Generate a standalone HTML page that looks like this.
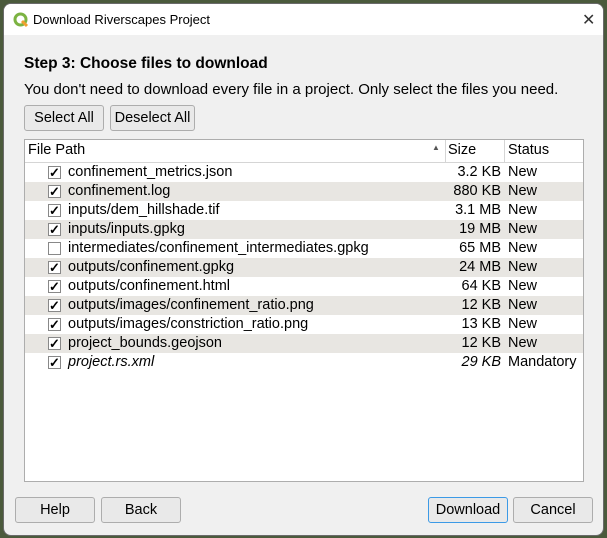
<!DOCTYPE html>
<html><head><style>
body{margin:0;width:607px;height:538px;background:#4b5a3c;font-family:"Liberation Sans",sans-serif;position:relative;overflow:hidden}
.win{position:absolute;left:4px;top:4px;width:599px;height:531px;background:#f0f0f0;border-radius:7px;overflow:hidden;box-shadow:0 0 0 1px #6a6a6a}
.tb{position:absolute;left:0;top:0;width:599px;height:31px;background:#fff}
.a{position:absolute;white-space:nowrap}
.btn{position:absolute;height:26px;border:1px solid #adadad;background:#e9e9e9;border-radius:3px;font-size:14.5px;text-align:center;line-height:25px;color:#000;box-sizing:border-box}
.tbl{position:absolute;left:20px;top:135px;width:560px;height:343px;background:#fff;border:1px solid #adadad;box-sizing:border-box}
.hd{position:absolute;left:0;top:0;width:558px;height:22px;border-bottom:1px solid #d5d5d5;background:#fff;font-size:14.5px}
.row{position:absolute;left:0;width:558px;height:19px;font-size:14.5px;line-height:19px}
.g{background:#e8e6e2}
.cb{position:absolute;left:23px;top:3px;width:11px;height:11px;border:1px solid #888;background:#fff;font-size:13px;font-weight:bold;line-height:11px;text-align:center}
.fp{position:absolute;left:43px}
.sz{position:absolute;right:82px}
.st{position:absolute;left:483px}
</style></head><body>
<div class="win">
<div class="tb">
<svg class="a" style="left:9px;top:8px" width="16" height="16" viewBox="0 0 16 16"><circle cx="7.5" cy="7.5" r="5.5" fill="none" stroke="#7cb342" stroke-width="3"/><path d="M9 9 L14 14" stroke="#f0a030" stroke-width="3"/></svg>
<div class="a" style="left:29px;top:8px;font-size:13px;color:#000">Download Riverscapes Project</div>
<div class="a" style="left:578px;top:6px;font-size:16px;color:#333">✕</div>
</div>
<div class="a" style="left:20px;top:51px;font-size:15.5px;font-weight:bold">Step 3: Choose files to download</div>
<div class="a" style="left:20px;top:77px;font-size:15px">You don't need to download every file in a project. Only select the files you need.</div>
<div class="btn" style="left:20px;top:101px;width:80px">Select All</div>
<div class="btn" style="left:106px;top:101px;width:85px">Deselect All</div>
<div class="tbl">
<div class="hd">
<div class="a" style="left:3px;top:2px">File Path</div>
<div class="a" style="left:407px;top:3px;font-size:8px;color:#555">▲</div>
<div class="a" style="left:420px;top:0;height:22px;border-left:1px solid #d5d5d5"></div>
<div class="a" style="left:423px;top:2px">Size</div>
<div class="a" style="left:479px;top:0;height:22px;border-left:1px solid #d5d5d5"></div>
<div class="a" style="left:483px;top:2px">Status</div>
</div>
<div class="row" style="top:23px"><div class="cb">✓</div><span class="fp">confinement_metrics.json</span><span class="sz">3.2 KB</span><span class="st">New</span></div>
<div class="row g" style="top:42px"><div class="cb">✓</div><span class="fp">confinement.log</span><span class="sz">880 KB</span><span class="st">New</span></div>
<div class="row" style="top:61px"><div class="cb">✓</div><span class="fp">inputs/dem_hillshade.tif</span><span class="sz">3.1 MB</span><span class="st">New</span></div>
<div class="row g" style="top:80px"><div class="cb">✓</div><span class="fp">inputs/inputs.gpkg</span><span class="sz">19 MB</span><span class="st">New</span></div>
<div class="row" style="top:99px"><div class="cb"></div><span class="fp">intermediates/confinement_intermediates.gpkg</span><span class="sz">65 MB</span><span class="st">New</span></div>
<div class="row g" style="top:118px"><div class="cb">✓</div><span class="fp">outputs/confinement.gpkg</span><span class="sz">24 MB</span><span class="st">New</span></div>
<div class="row" style="top:137px"><div class="cb">✓</div><span class="fp">outputs/confinement.html</span><span class="sz">64 KB</span><span class="st">New</span></div>
<div class="row g" style="top:156px"><div class="cb">✓</div><span class="fp">outputs/images/confinement_ratio.png</span><span class="sz">12 KB</span><span class="st">New</span></div>
<div class="row" style="top:175px"><div class="cb">✓</div><span class="fp">outputs/images/constriction_ratio.png</span><span class="sz">13 KB</span><span class="st">New</span></div>
<div class="row g" style="top:194px"><div class="cb">✓</div><span class="fp">project_bounds.geojson</span><span class="sz">12 KB</span><span class="st">New</span></div>
<div class="row" style="top:213px"><div class="cb">✓</div><span class="fp" style="font-style:italic">project.rs.xml</span><span class="sz" style="font-style:italic">29 KB</span><span class="st">Mandatory</span></div>
</div>
<div class="btn" style="left:11px;top:493px;width:80px">Help</div>
<div class="btn" style="left:97px;top:493px;width:80px">Back</div>
<div class="btn" style="left:424px;top:493px;width:80px;border-color:#3c9ae6">Download</div>
<div class="btn" style="left:509px;top:493px;width:80px">Cancel</div>
</div>
</body></html>
